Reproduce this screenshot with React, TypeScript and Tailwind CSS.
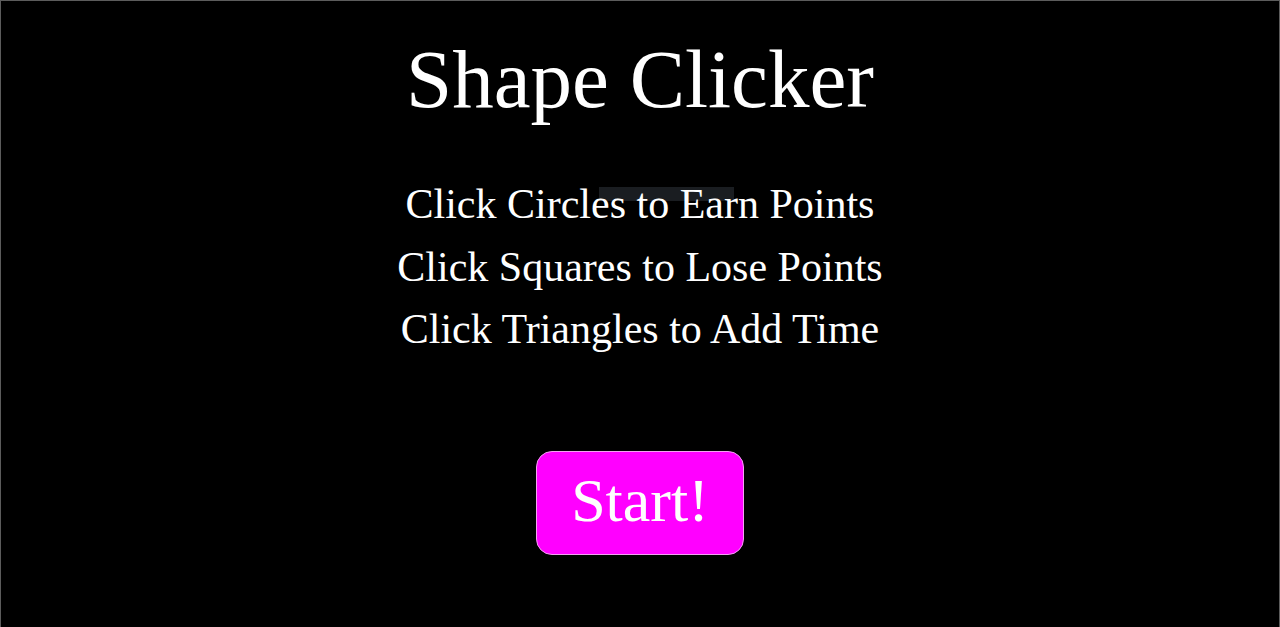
export default function App() {
  const rules = [
    "Click Circles to Earn Points",
    "Click Squares to Lose Points",
    "Click Triangles to Add Time",
  ];
  return (
    <div className="relative h-[627px] w-[1280px] overflow-hidden border-x border-t border-[#5c5c5c] bg-black text-white [font-family:'Liberation_Serif',serif]">
      {/* faint score strip sitting behind the first rule */}
      <div className="absolute left-[598px] top-[186px] h-[14px] w-[135px] bg-[#1a1d21]" />
      <div className="relative flex flex-col items-center">
        <h1 className="mt-[37px] text-[83px] leading-none font-normal">Shape Clicker</h1>
        <div className="mt-[52px] flex flex-col items-center">
          {rules.map((r) => (
            <p key={r} className="text-[42px] leading-[62.5px]">
              {r}
            </p>
          ))}
        </div>
        <button className="mt-[90px] flex h-[104px] w-[208px] items-center justify-center rounded-[16px] border border-[#f3a0f3] bg-[#ff00ff] pb-[6px] text-[62px] leading-none text-white">
          Start!
        </button>
      </div>
    </div>
  );
}
